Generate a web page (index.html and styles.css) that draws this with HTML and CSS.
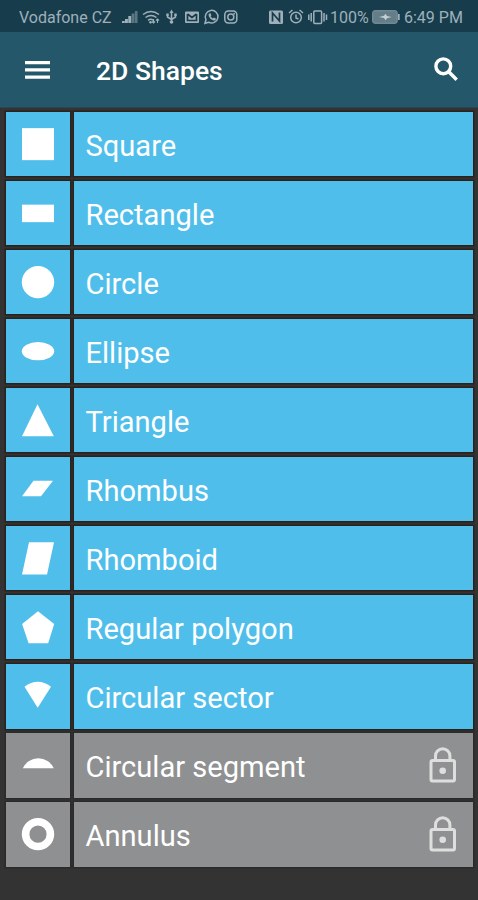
FILE: index.html
```html
<!DOCTYPE html>
<html lang="en">
	<head>
		<meta charset="utf-8">
		<meta name="viewport" content="width=device-width, initial-scale=1.0">
		<title>2D Shapes</title>
		<link rel="stylesheet" href="styles.css">
	</head>
	<body>
		<div class="status">
			<span class="carrier">Vodafone CZ</span>
			<svg class="status-left" width="118" height="18" viewBox="0 0 118 18">
				<!-- signal -->
				<path d="M0 15v-2h2.800v2zM3 15v-4h2.900v4zM6.300 15v-7h2.900v7z"/>
				<path class="dim" d="M9.600 15v-9.500h2.900v9.500zM12.900 15v-12h2.600v12z"/>
				<!-- wifi -->
				<g class="line">
					<path d="M21 6.500q8-6 16 0M23.500 9.500q5.500-4 11 0M26 12.300q3-2 5 0"/>
					<path d="M31.500 11v4M30 13.500l1.500 1.500 1.500-1.500M35.500 15v-4M34 12.500l1.500-1.500 1.500 1.500" stroke-width="1.100"/>
				</g>
				<circle cx="28.500" cy="14.300" r="1.300"/>
				<!-- usb -->
				<path class="line" d="M49.500 4v9.500M45.500 6.500v2.500l4 2.500 4-2.500v-2.500"/>
				<path d="M47.500 5l2-3.500 2 3.500zM44.300 5.500h2.400v2.400h-2.400zM52.300 5.500h2.400v2.400h-2.400z"/>
				<circle cx="49.500" cy="14" r="1.800"/>
				<!-- mail -->
				<rect x="63" y="3.500" width="14" height="11.500" rx="1"/>
				<path class="cut" d="M65.500 6l4.500 3.500 4.500-3.500M65.500 6v6.500h9v-6.500" stroke-width="1.200"/>
				<!-- whatsapp -->
				<path class="line" d="M83 15.300l1-3.800a6.300 6.300 0 1 1 2.600 2.700z"/>
				<path d="M87 5.500l1.500-.3.900 2-.8 1.100q.8 1.500 2.300 2.200l1-1 2 1-.3 1.400q-1 1-2.800.3-3-1.200-4-4-.5-1.700.2-2.700z"/>
				<!-- instagram -->
				<rect class="line" x="102.800" y="3" width="12" height="12" rx="3.500"/>
				<circle class="line" cx="108.800" cy="9" r="3"/>
				<circle cx="112.200" cy="5.700" r=".9"/>
			</svg>
			<svg class="status-right" width="60" height="18" viewBox="0 0 60 18">
				<!-- nfc -->
				<rect x="1" y="2.500" width="14" height="13.500" rx="1.500"/>
				<path class="cut" d="M4.500 13.500v-8.500l7 8v-8.500"/>
				<!-- alarm -->
				<g class="line">
					<circle cx="28" cy="9.500" r="5.300"/>
					<path d="M28 6.500v3.500l2.500 1M21 5l3.500-3M35 5l-3.500-3"/>
				</g>
				<!-- vibrate -->
				<g class="line">
					<rect x="45.800" y="3" width="7.800" height="12.500" rx="1"/>
					<path d="M43.200 5v8.500M56 5v8.500M40.800 6.500v5.500M58.500 6.500v5.500"/>
				</g>
			</svg>
			<span class="percent">100%</span>
			<svg class="battery" width="29" height="16" viewBox="0 0 29 16">
				<rect class="cell-body" x=".7" y="1.700" width="24.500" height="12.600" rx="2"/>
				<path d="M26 5h1.700v6h-1.700z"/>
				<path class="bolt" d="M7 8l5-1.200 1.500-2 1.500 2.200 4.500 1-4.500 1.300-1.500 2-1.500-2.300z"/>
			</svg>
			<span class="time">6:49 PM</span>
		</div>
		<header class="bar">
			<svg class="menu" width="26" height="18" viewBox="0 0 26 18">
				<path d="M0 0h25v3.200h-25zM0 7.300h25v3.200h-25zM0 14.500h25v3.200h-25z"/>
			</svg>
			<h1>2D Shapes</h1>
			<svg class="search" width="25" height="25" viewBox="0 0 25 25">
				<circle cx="9.300" cy="9.300" r="7.400"/>
				<path d="M14.500 14.500l8.200 8.300"/>
			</svg>
		</header>
		<main>
			<ul class="shapes">
				<li>
					<svg class="icon" viewBox="0 0 64 64"><rect x="16" y="16" width="32" height="32"/></svg>
					<span class="name">Square</span>
				</li>
				<li>
					<svg class="icon" viewBox="0 0 64 64"><rect x="16" y="23.500" width="32" height="17.500"/></svg>
					<span class="name">Rectangle</span>
				</li>
				<li>
					<svg class="icon" viewBox="0 0 64 64"><circle cx="32" cy="32" r="16.200"/></svg>
					<span class="name">Circle</span>
				</li>
				<li>
					<svg class="icon" viewBox="0 0 64 64"><ellipse cx="32" cy="32" rx="16.200" ry="9.200"/></svg>
					<span class="name">Ellipse</span>
				</li>
				<li>
					<svg class="icon" viewBox="0 0 64 64"><path d="M31.500 16l16.300 32.200h-31.800z"/></svg>
					<span class="name">Triangle</span>
				</li>
				<li>
					<svg class="icon" viewBox="0 0 64 64"><path d="M27.500 23.700h19.500l-12 15.500h-19z"/></svg>
					<span class="name">Rhombus</span>
				</li>
				<li>
					<svg class="icon" viewBox="0 0 64 64"><path d="M23 16h25l-7 32.400h-25z"/></svg>
					<span class="name">Rhomboid</span>
				</li>
				<li>
					<svg class="icon" viewBox="0 0 64 64"><path d="M32 16l16.200 12.800-6 19.400h-19.600l-6.500-19.400z"/></svg>
					<span class="name">Regular polygon</span>
				</li>
				<li>
					<svg class="icon" viewBox="0 0 64 64"><path d="M18.500 22.500q13.300-10 26.500 0l-13.300 21z"/></svg>
					<span class="name">Circular sector</span>
				</li>
				<li class="locked">
					<svg class="icon" viewBox="0 0 64 64"><path d="M16.800 35.200a17 17 0 0 1 31 0z"/></svg>
					<span class="name">Circular segment</span>
					<svg class="lock" viewBox="0 0 28 36">
						<rect x="2" y="13.500" width="23.500" height="20.500" rx="1.500"/>
						<path d="M6.500 13.500v-4.500a7.200 7.200 0 0 1 14.400 0v4.500"/>
						<circle cx="13.700" cy="23.700" r="3.300"/>
					</svg>
				</li>
				<li class="locked">
					<svg class="icon" viewBox="0 0 64 64"><circle class="ring" cx="32" cy="32" r="12.400"/></svg>
					<span class="name">Annulus</span>
					<svg class="lock" viewBox="0 0 28 36">
						<rect x="2" y="13.500" width="23.500" height="20.500" rx="1.500"/>
						<path d="M6.500 13.500v-4.500a7.200 7.200 0 0 1 14.400 0v4.500"/>
						<circle cx="13.700" cy="23.700" r="3.300"/>
					</svg>
				</li>
			</ul>
		</main>
	</body>
</html>
```

FILE: styles.css
```css
body {
	margin: 0;
	height: 900px;
	overflow: hidden;
	background: #333;
	color: #fff;
	font-family: Roboto, sans-serif;
}

svg {
	flex: none;
	fill: #fff;
}

.status {
	display: flex;
	align-items: center;
	box-sizing: border-box;
	height: 32px;
	padding: 2px 0 0 19px;
	background: #173d4d;
	color: #9fb0ba;
	font-size: 16px;
	white-space: nowrap;
}

.status svg {
	fill: #9fb0ba;
}

.status .dim {
	opacity: .5;
}

.status .line {
	fill: none;
	stroke: #9fb0ba;
	stroke-width: 1.5;
}

.status .cut {
	fill: none;
	stroke: #173d4d;
	stroke-width: 1.7;
}

.carrier {
	width: 103px;
}

.status-right {
	margin-left: 28px;
}

.percent {
	width: 40px;
	margin-left: 2px;
}

.battery {
	margin-left: 2px;
}

.status .cell-body {
	fill: #647e89;
	stroke: #8497a1;
	stroke-width: 1;
}

.status .bolt {
	fill: #c3ced3;
}

.time {
	margin-left: 3px;
}

.bar {
	display: flex;
	align-items: center;
	box-sizing: border-box;
	height: 76px;
	padding: 0 19px 0 25px;
	background: #235769;
	border-bottom: 1px solid #2c4651;
}

h1 {
	flex: 1;
	margin: 2px 0 0 45px;
	font-size: 26.5px;
	font-weight: 500;
	line-height: 32px;
}

.menu {
	margin-top: 1px;
}

.search {
	fill: none;
	stroke: #fff;
	stroke-width: 3.4;
}

.shapes {
	display: grid;
	gap: 4.8px;
	margin: 0;
	padding: 3.5px 5px 0 5.5px;
	list-style: none;
}

.shapes li {
	display: flex;
	gap: 4.8px;
	height: 64.3px;
	position: relative;
}

.icon,
.name {
	background: #50beeb;
	box-shadow: 0 0 0 1.5px #2a221e;
}

.icon {
	width: 64px;
	height: 64.3px;
}

.name {
	flex: 1;
	padding-left: 11.2px;
	font-size: 29.1px;
	line-height: 68px;
}

.locked .icon,
.locked .name {
	background: #8f9091;
	box-shadow: 0 0 0 1.5px #2b2b2b;
}

.ring {
	fill: none;
	stroke: #fff;
	stroke-width: 7.6;
}

/* sits on top of the name cell */
.lock {
	position: absolute;
	top: 13.5px;
	right: 16.5px;
	width: 28px;
	height: 36px;
	fill: none;
	stroke: #dedede;
	stroke-width: 3;
}

.lock circle {
	fill: #dedede;
	stroke: none;
}
```
